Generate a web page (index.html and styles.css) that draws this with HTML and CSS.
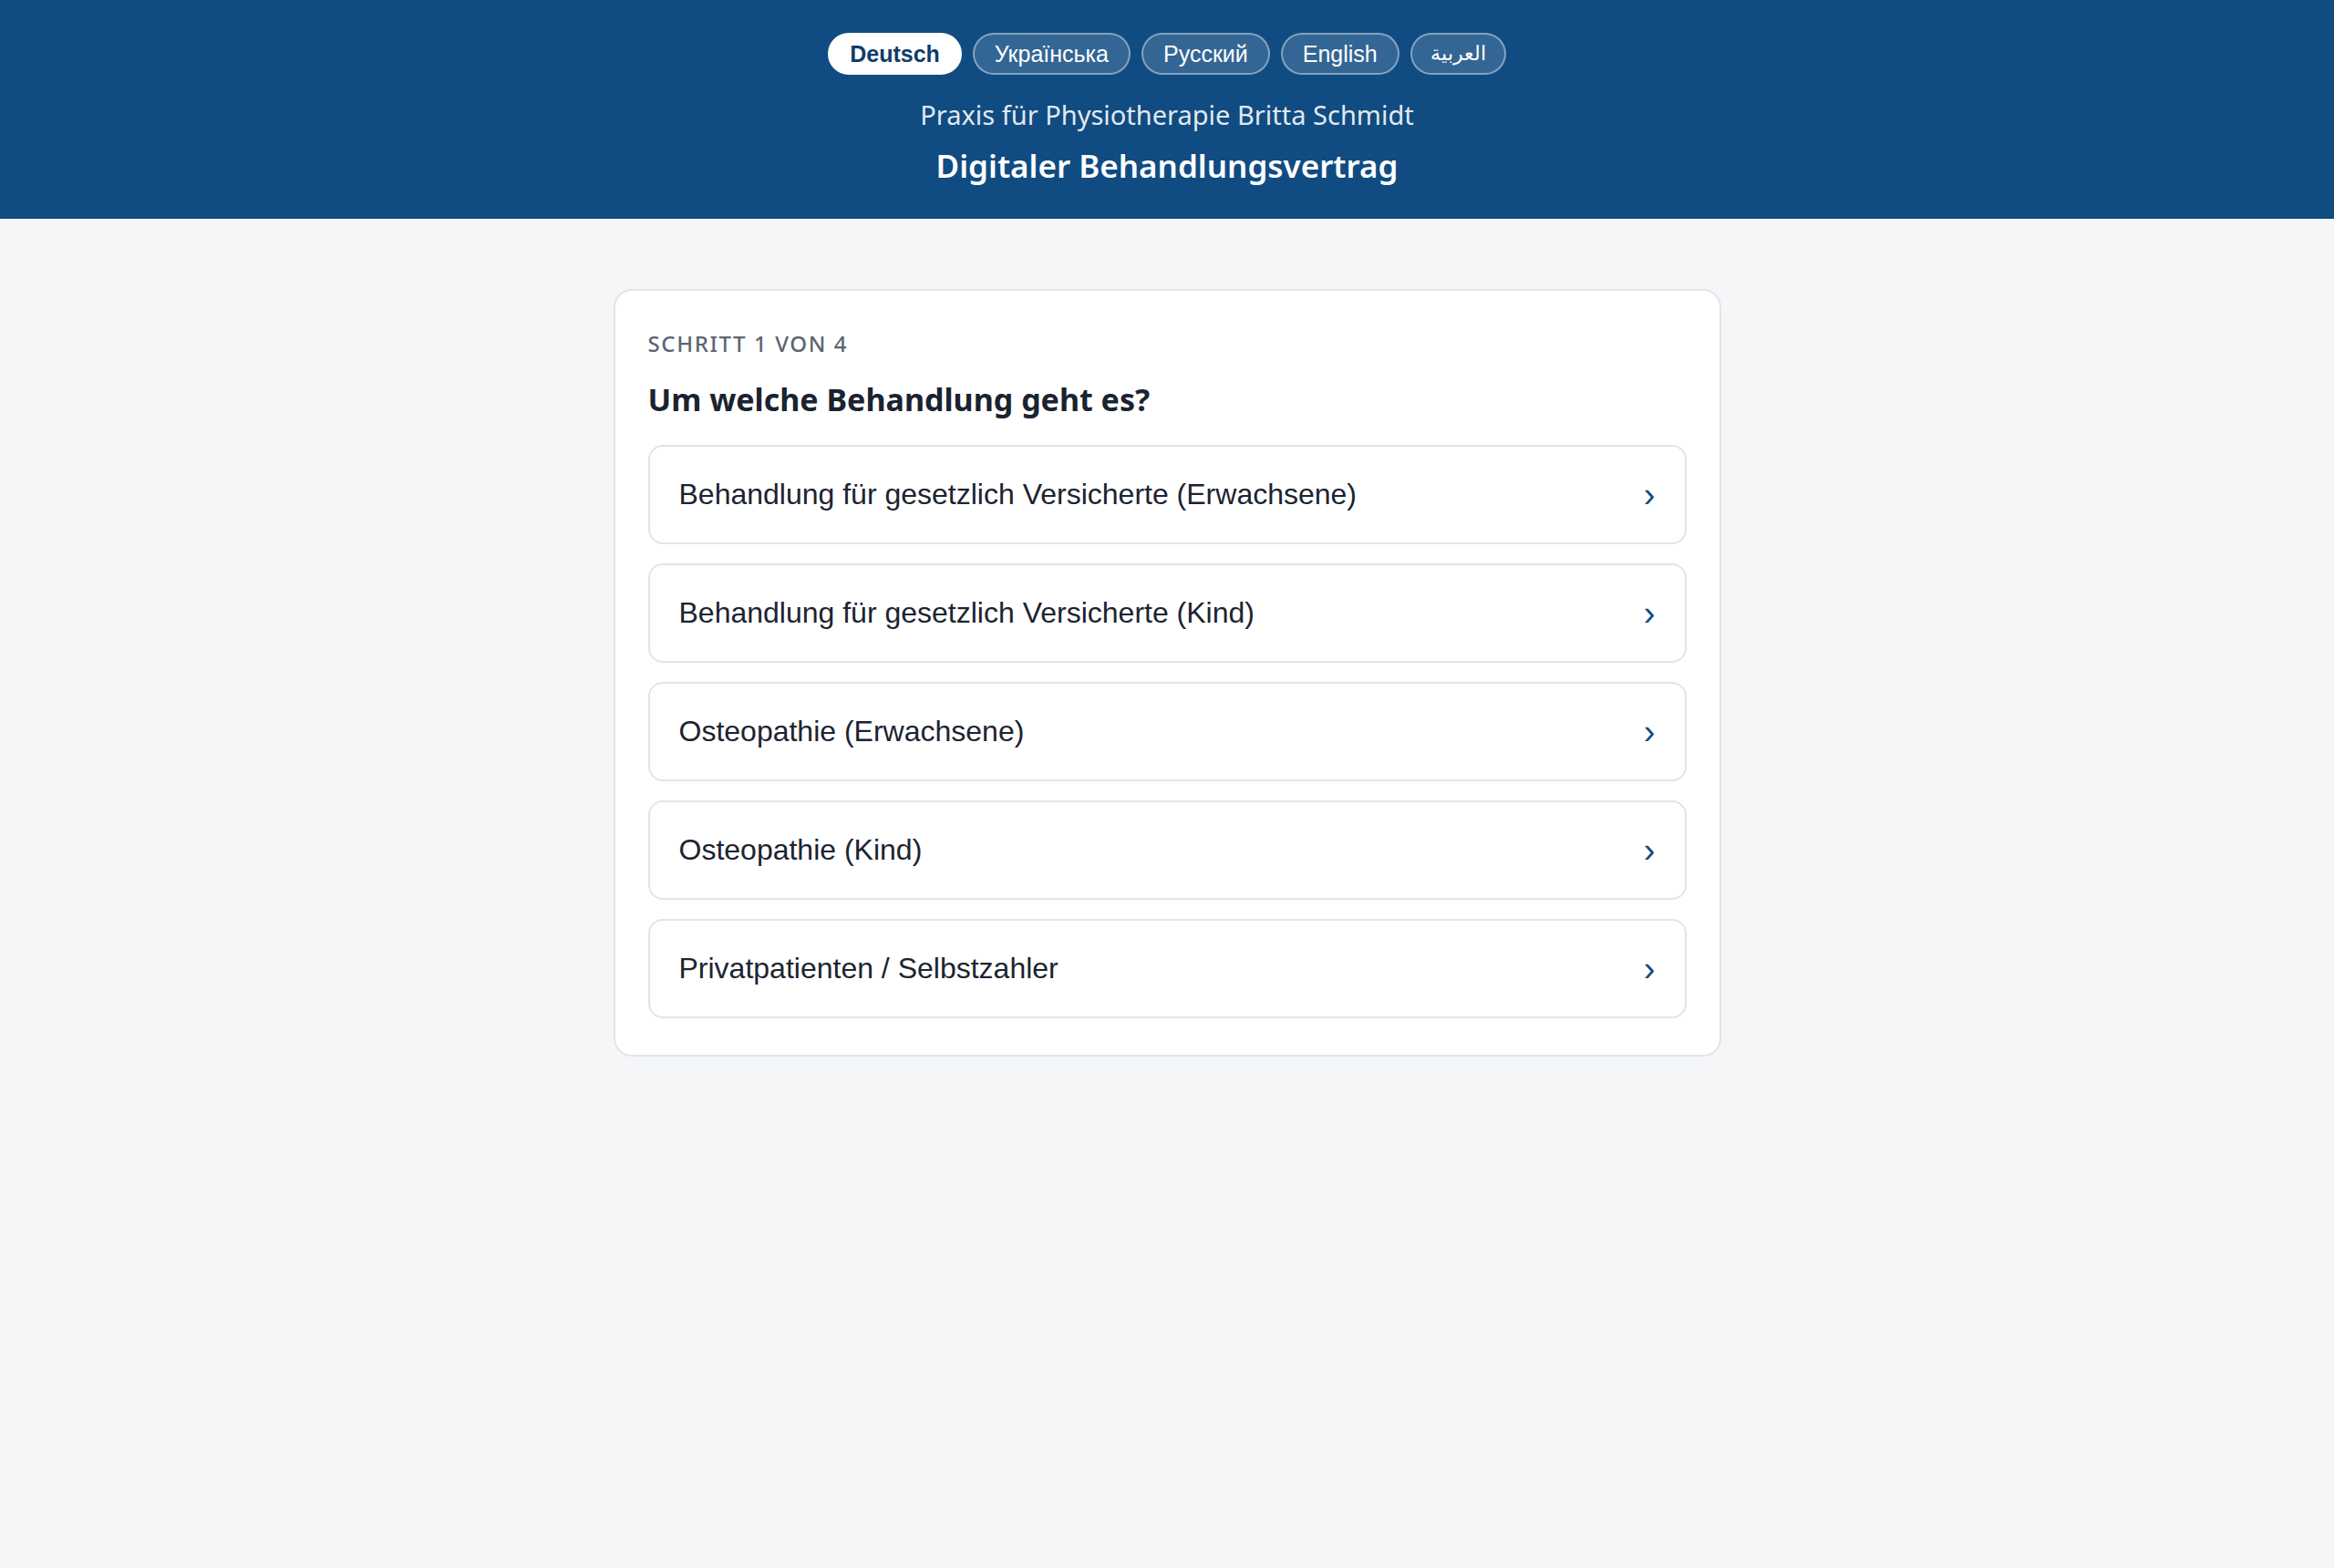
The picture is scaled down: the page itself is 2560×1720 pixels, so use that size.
FILE: index.html
```html
<!DOCTYPE html>
<html lang="de">
<head>
<meta charset="utf-8">
<title>Digitaler Behandlungsvertrag</title>
<link rel="stylesheet" href="styles.css">
</head>
<body>
<header class="site-header">
  <nav class="lang-switch">
    <button class="lang-pill is-active">Deutsch</button>
    <button class="lang-pill">Українська</button>
    <button class="lang-pill">Русский</button>
    <button class="lang-pill">English</button>
    <button class="lang-pill lang-ar" dir="rtl">العربية</button>
  </nav>
  <p class="practice-name">Praxis für Physiotherapie Britta Schmidt</p>
  <h1 class="page-title">Digitaler Behandlungsvertrag</h1>
</header>
<main class="content">
  <section class="card">
    <div class="step-label">Schritt 1 von 4</div>
    <h2 class="question">Um welche Behandlung geht es?</h2>
    <div class="options">
      <button class="option"><span>Behandlung für gesetzlich Versicherte (Erwachsene)</span><span class="chevron">›</span></button>
      <button class="option"><span>Behandlung für gesetzlich Versicherte (Kind)</span><span class="chevron">›</span></button>
      <button class="option"><span>Osteopathie (Erwachsene)</span><span class="chevron">›</span></button>
      <button class="option"><span>Osteopathie (Kind)</span><span class="chevron">›</span></button>
      <button class="option"><span>Privatpatienten / Selbstzahler</span><span class="chevron">›</span></button>
    </div>
  </section>
</main>
</body>
</html>
```
FILE: styles.css
```css
html, body {
  margin: 0;
  padding: 0;
}
body {
  background: #f5f6f8;
  font-family: "Noto Sans", "Open Sans", sans-serif;
  color: #1c2430;
  min-height: 1720px;
}
.site-header {
  background: #104c82;
  color: #fff;
  height: 240px;
  box-sizing: border-box;
  padding-top: 36px;
  display: flex;
  flex-direction: column;
  align-items: center;
}
.lang-switch {
  display: flex;
  gap: 12px;
}
.lang-pill {
  height: 46px;
  box-sizing: border-box;
  padding: 0 22px;
  border-radius: 23px;
  border: 2px solid rgba(255, 255, 255, 0.4);
  background: rgba(255, 255, 255, 0.15);
  color: #fff;
  font-family: "Liberation Sans", Arial, sans-serif;
  font-size: 25px;
}
.lang-pill.lang-ar {
  font-size: 22px;
  padding: 0 20px;
}
.lang-pill.is-active {
  background: #fff;
  border-color: #fff;
  color: #0f3d6b;
  font-weight: 700;
}
.practice-name {
  margin: 25px 0 0;
  font-size: 29px;
  line-height: 38px;
  color: rgba(255, 255, 255, 0.9);
}
.page-title {
  margin: 13px 0 0;
  font-size: 35px;
  line-height: 48px;
  font-weight: 600;
}
.content {
  display: flex;
  justify-content: center;
  padding-top: 77px;
}
.card {
  width: 1215px;
  box-sizing: border-box;
  background: #fff;
  border: 2px solid #e1e5ea;
  border-radius: 20px;
  padding: 43px 36px 40px;
}
.step-label {
  font-size: 24px;
  line-height: 30px;
  letter-spacing: 1.6px;
  text-transform: uppercase;
  color: #5b6573;
  font-weight: 500;
}
.question {
  margin: 24px 0 0;
  font-size: 34px;
  line-height: 44px;
  font-weight: 700;
  color: #1a2330;
}
.options {
  margin-top: 28px;
  display: flex;
  flex-direction: column;
  gap: 21px;
}
.option {
  height: 109px;
  box-sizing: border-box;
  display: flex;
  align-items: center;
  justify-content: space-between;
  padding: 0 32px 0 32px;
  background: #fff;
  border: 2px solid #e1e5ea;
  border-radius: 16px;
  font-family: "Liberation Sans", Arial, sans-serif;
  font-size: 32px;
  color: #1c2430;
  text-align: left;
}
.chevron {
  color: #104c82;
  font-size: 38px;
  line-height: 1;
}
```
